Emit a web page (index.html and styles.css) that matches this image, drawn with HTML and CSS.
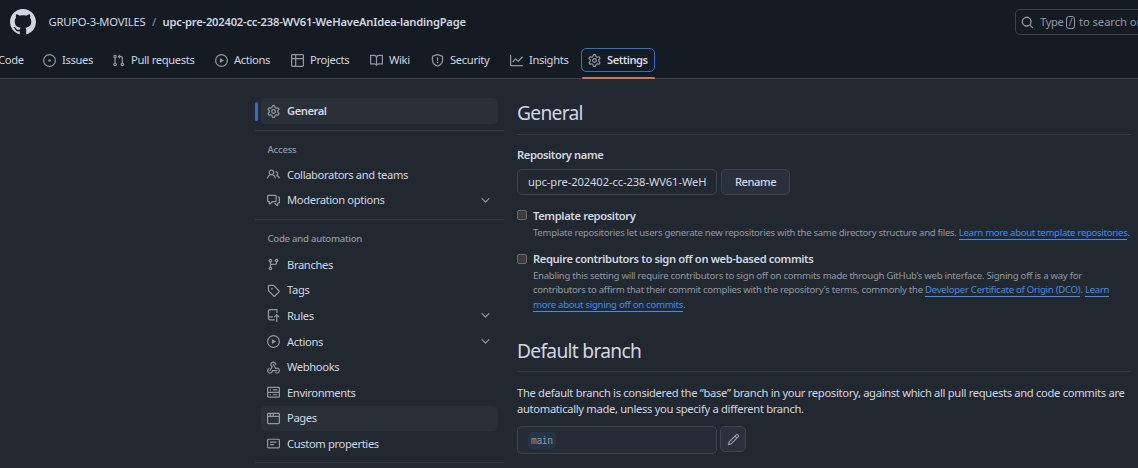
FILE: index.html
```html
<!DOCTYPE html>
<html lang="en">
<head>
<meta charset="utf-8">
<title>Settings</title>
<link rel="stylesheet" href="styles.css">
</head>
<body>
<svg class="defs" aria-hidden="true">
  <symbol id="github" viewBox="0 0 16 16"><path d="M8 0c4.42 0 8 3.58 8 8a8.013 8.013 0 0 1-5.45 7.59c-.4.08-.55-.17-.55-.38 0-.27.01-1.13.01-2.2 0-.75-.25-1.23-.54-1.48 1.78-.2 3.65-.88 3.65-3.95 0-.88-.31-1.59-.82-2.15.08-.2.36-1.02-.08-2.12 0 0-.67-.22-2.2.82-.64-.18-1.32-.27-2-.27-.68 0-1.36.09-2 .27-1.53-1.03-2.2-.82-2.2-.82-.44 1.1-.16 1.92-.08 2.12-.51.56-.82 1.28-.82 2.15 0 3.06 1.86 3.75 3.64 3.95-.23.2-.44.55-.51 1.07-.46.21-1.61.55-2.33-.66-.15-.24-.6-.83-1.23-.82-.67.01-.27.38.01.53.34.19.73.9.82 1.13.16.45.68 1.31 2.69.94 0 .67.01 1.3.01 1.49 0 .21-.15.45-.55.38A7.995 7.995 0 0 1 0 8c0-4.42 3.58-8 8-8Z"/></symbol>
  <symbol id="issue" viewBox="0 0 16 16"><path d="M8 9.5a1.5 1.5 0 1 0 0-3 1.5 1.5 0 0 0 0 3Z"/><path d="M8 0a8 8 0 1 1 0 16A8 8 0 0 1 8 0ZM1.5 8a6.5 6.5 0 1 0 13 0 6.5 6.5 0 0 0-13 0Z"/></symbol>
  <symbol id="pull" viewBox="0 0 16 16"><path d="M1.5 3.25a2.25 2.25 0 1 1 3 2.122v5.256a2.251 2.251 0 1 1-1.5 0V5.372A2.25 2.25 0 0 1 1.5 3.25Zm5.677-.177L9.573.677A.25.25 0 0 1 10 .854V2.5h1A2.5 2.5 0 0 1 13.5 5v5.628a2.251 2.251 0 1 1-1.5 0V5a1 1 0 0 0-1-1h-1v1.646a.25.25 0 0 1-.427.177L7.177 3.427a.25.25 0 0 1 0-.354ZM3.75 2.5a.75.75 0 1 0 0 1.5.75.75 0 0 0 0-1.5Zm0 9.5a.75.75 0 1 0 0 1.5.75.75 0 0 0 0-1.5Zm8.25.75a.75.75 0 1 0 1.5 0 .75.75 0 0 0-1.5 0Z"/></symbol>
  <symbol id="play" viewBox="0 0 16 16"><path d="M8 0a8 8 0 1 1 0 16A8 8 0 0 1 8 0ZM1.5 8a6.5 6.5 0 1 0 13 0 6.5 6.5 0 0 0-13 0Zm4.879-2.773 4.264 2.559a.25.25 0 0 1 0 .428l-4.264 2.559A.25.25 0 0 1 6 10.559V5.442a.25.25 0 0 1 .379-.215Z"/></symbol>
  <symbol id="table" viewBox="0 0 16 16"><path d="M0 1.75C0 .784.784 0 1.75 0h12.5C15.216 0 16 .784 16 1.75v12.5A1.75 1.75 0 0 1 14.25 16H1.75A1.75 1.75 0 0 1 0 14.25ZM6.5 6.5v8h7.75a.25.25 0 0 0 .25-.25V6.5Zm8-1.5V1.75a.25.25 0 0 0-.25-.25H6.5V5Zm-13 1.5v7.75c0 .138.112.25.25.25H5v-8ZM5 5V1.5H1.75a.25.25 0 0 0-.25.25V5Z"/></symbol>
  <symbol id="book" viewBox="0 0 16 16"><path d="M0 1.75A.75.75 0 0 1 .75 1h4.253c1.227 0 2.317.59 3 1.501A3.743 3.743 0 0 1 11.006 1h4.245a.75.75 0 0 1 .75.75v10.5a.75.75 0 0 1-.75.75h-4.507a2.25 2.25 0 0 0-1.591.659l-.622.621a.75.75 0 0 1-1.06 0l-.622-.621A2.25 2.25 0 0 0 5.258 13H.75a.75.75 0 0 1-.75-.75Zm7.251 10.324.004-5.073-.002-2.253A2.25 2.25 0 0 0 5.003 2.5H1.5v9h3.757a3.75 3.75 0 0 1 1.994.574ZM8.755 4.75l-.004 7.322a3.752 3.752 0 0 1 1.992-.572H14.5v-9h-3.495a2.25 2.25 0 0 0-2.25 2.25Z"/></symbol>
  <symbol id="shield" viewBox="0 0 16 16"><path d="M7.467.133a1.748 1.748 0 0 1 1.066 0l5.25 1.68A1.75 1.75 0 0 1 15 3.48V7c0 1.566-.32 3.182-1.303 4.682-.983 1.498-2.585 2.813-5.032 3.855a1.697 1.697 0 0 1-1.33 0c-2.447-1.042-4.049-2.357-5.032-3.855C1.32 10.182 1 8.566 1 7V3.48a1.75 1.75 0 0 1 1.217-1.667Zm.61 1.429a.25.25 0 0 0-.153 0l-5.25 1.68a.25.25 0 0 0-.174.238V7c0 1.358.275 2.666 1.057 3.86.784 1.194 2.121 2.34 4.366 3.297a.196.196 0 0 0 .154 0c2.245-.956 3.582-2.104 4.366-3.298C13.225 9.666 13.5 8.36 13.5 7V3.48a.251.251 0 0 0-.174-.237ZM8.75 4.75v3a.75.75 0 0 1-1.5 0v-3a.75.75 0 0 1 1.5 0ZM9 10.5a1 1 0 1 1-2 0 1 1 0 0 1 2 0Z"/></symbol>
  <symbol id="graph" viewBox="0 0 16 16"><path d="M1.5 1.75V13.5h13.75a.75.75 0 0 1 0 1.5H.75a.75.75 0 0 1-.75-.75V1.75a.75.75 0 0 1 1.5 0Zm14.28 2.53-5.25 5.25a.75.75 0 0 1-1.06 0L7 7.06 4.28 9.78a.75.75 0 0 1-1.06-1.06l3.25-3.25a.75.75 0 0 1 1.06 0L10 7.94l4.72-4.72a.75.75 0 0 1 1.06 1.06Z"/></symbol>
  <symbol id="gear" viewBox="0 0 16 16"><path d="M8 0a8.2 8.2 0 0 1 .701.031C9.444.095 9.99.645 10.16 1.29l.288 1.107c.018.066.079.158.212.224.231.114.454.243.668.386.123.082.233.09.299.071l1.103-.303c.644-.176 1.392.021 1.82.63.27.385.506.792.704 1.218.315.675.111 1.422-.364 1.891l-.814.806c-.049.048-.098.147-.088.294.016.257.016.515 0 .772-.01.147.038.246.088.294l.814.806c.475.469.679 1.216.364 1.891a7.977 7.977 0 0 1-.704 1.217c-.428.61-1.176.807-1.82.63l-1.102-.302c-.067-.019-.177-.011-.3.071a5.909 5.909 0 0 1-.668.386c-.133.066-.194.158-.211.224l-.29 1.106c-.168.646-.715 1.196-1.458 1.26a8.006 8.006 0 0 1-1.402 0c-.743-.064-1.289-.614-1.458-1.26l-.289-1.106c-.018-.066-.079-.158-.212-.224a5.738 5.738 0 0 1-.668-.386c-.123-.082-.233-.09-.299-.071l-1.103.303c-.644.176-1.392-.021-1.82-.63a8.12 8.12 0 0 1-.704-1.218c-.315-.675-.111-1.422.363-1.891l.815-.806c.05-.048.098-.147.088-.294a6.214 6.214 0 0 1 0-.772c.01-.147-.038-.246-.088-.294l-.815-.806C.635 6.045.431 5.298.746 4.623a7.92 7.92 0 0 1 .704-1.217c.428-.61 1.176-.807 1.82-.63l1.102.302c.067.019.177.011.3-.071.214-.143.437-.272.668-.386.133-.066.194-.158.211-.224l.29-1.106C6.009.645 6.556.095 7.299.03 7.53.01 7.764 0 8 0Zm-.571 1.525c-.036.003-.108.036-.137.146l-.289 1.105c-.147.561-.549.967-.998 1.189-.173.086-.34.183-.5.29-.417.278-.97.423-1.529.27l-1.103-.303c-.109-.03-.175.016-.195.045-.22.312-.412.644-.573.99-.014.031-.021.11.059.19l.815.806c.411.406.562.957.53 1.456a4.709 4.709 0 0 0 0 .582c.032.499-.119 1.05-.53 1.456l-.815.806c-.081.08-.073.159-.059.19.162.346.353.677.573.989.02.03.085.076.195.046l1.102-.303c.56-.153 1.113-.008 1.53.27.161.107.328.204.501.29.447.222.85.629.997 1.189l.289 1.105c.029.109.101.143.137.146a6.6 6.6 0 0 0 1.142 0c.036-.003.108-.036.137-.146l.289-1.105c.147-.561.549-.967.998-1.189.173-.086.34-.183.5-.29.417-.278.97-.423 1.529-.27l1.103.303c.109.029.175-.016.195-.045.22-.313.411-.644.573-.99.014-.031.021-.11-.059-.19l-.815-.806c-.411-.406-.562-.957-.53-1.456a4.709 4.709 0 0 0 0-.582c-.032-.499.119-1.05.53-1.456l.815-.806c.081-.08.073-.159.059-.19a6.464 6.464 0 0 0-.573-.989c-.02-.03-.085-.076-.195-.046l-1.102.303c-.56.153-1.113.008-1.53-.27a4.44 4.44 0 0 0-.501-.29c-.447-.222-.85-.629-.997-1.189l-.289-1.105c-.029-.11-.101-.143-.137-.146a6.6 6.6 0 0 0-1.142 0ZM11 8a3 3 0 1 1-6 0 3 3 0 0 1 6 0ZM9.5 8a1.5 1.5 0 1 0-3.001.001A1.5 1.5 0 0 0 9.5 8Z"/></symbol>
  <symbol id="search" viewBox="0 0 16 16"><path d="M10.68 11.74a6 6 0 0 1-7.922-8.982 6 6 0 0 1 8.982 7.922l3.04 3.04a.749.749 0 0 1-1.06 1.06ZM11.5 7a4.499 4.499 0 1 0-8.997 0A4.499 4.499 0 0 0 11.5 7Z"/></symbol>
  <symbol id="people" viewBox="0 0 16 16"><path d="M2 5.5a3.5 3.5 0 1 1 5.898 2.549 5.508 5.508 0 0 1 3.034 4.084.75.75 0 1 1-1.482.235 4 4 0 0 0-7.9 0 .75.75 0 0 1-1.482-.236A5.507 5.507 0 0 1 3.102 8.05 3.493 3.493 0 0 1 2 5.5ZM11 4a3.001 3.001 0 0 1 2.22 5.018 5.01 5.01 0 0 1 2.56 3.012.749.749 0 0 1-.885.954.752.752 0 0 1-.549-.514 3.507 3.507 0 0 0-2.522-2.372.75.75 0 0 1-.574-.73v-.352a.75.75 0 0 1 .416-.672A1.5 1.5 0 0 0 11 5.5.75.75 0 0 1 11 4Zm-5.5-.5a2 2 0 1 0-.001 3.999A2 2 0 0 0 5.5 3.5Z"/></symbol>
  <symbol id="comments" viewBox="0 0 16 16"><path d="M1.75 1h8.5c.966 0 1.75.784 1.75 1.75v5.5A1.75 1.75 0 0 1 10.25 10H7.061l-2.574 2.573A1.458 1.458 0 0 1 2 11.543V10h-.25A1.75 1.75 0 0 1 0 8.25v-5.5C0 1.784.784 1 1.75 1ZM1.5 2.75v5.5c0 .138.112.25.25.25h1a.75.75 0 0 1 .75.75v2.19l2.72-2.72a.749.749 0 0 1 .53-.22h3.5a.25.25 0 0 0 .25-.25v-5.5a.25.25 0 0 0-.25-.25h-8.5a.25.25 0 0 0-.25.25Zm13 2a.25.25 0 0 0-.25-.25h-.5a.75.75 0 0 1 0-1.5h.5c.966 0 1.75.784 1.75 1.75v5.5A1.75 1.75 0 0 1 14.25 12H14v1.543a1.458 1.458 0 0 1-2.487 1.03L9.22 12.28a.749.749 0 0 1 1.06-1.06l2.22 2.22v-2.19a.75.75 0 0 1 .75-.75h1a.25.25 0 0 0 .25-.25Z"/></symbol>
  <symbol id="branch" viewBox="0 0 16 16"><path d="M9.5 3.25a2.25 2.25 0 1 1 3 2.122V6A2.5 2.5 0 0 1 10 8.5H6a1 1 0 0 0-1 1v1.128a2.251 2.251 0 1 1-1.5 0V5.372a2.25 2.25 0 1 1 1.5 0v1.836A2.493 2.493 0 0 1 6 7h4a1 1 0 0 0 1-1v-.628A2.25 2.25 0 0 1 9.5 3.25Zm-6 0a.75.75 0 1 0 1.5 0 .75.75 0 0 0-1.5 0Zm8.25-.75a.75.75 0 1 0 0 1.5.75.75 0 0 0 0-1.5ZM4.25 12a.75.75 0 1 0 0 1.5.75.75 0 0 0 0-1.5Z"/></symbol>
  <symbol id="tag" viewBox="0 0 16 16"><path d="M1 7.775V2.75C1 1.784 1.784 1 2.75 1h5.025c.464 0 .91.184 1.238.513l6.25 6.25a1.75 1.75 0 0 1 0 2.474l-5.026 5.026a1.75 1.75 0 0 1-2.474 0l-6.25-6.25A1.752 1.752 0 0 1 1 7.775Zm1.5 0c0 .066.026.13.073.177l6.25 6.25a.25.25 0 0 0 .354 0l5.025-5.025a.25.25 0 0 0 0-.354l-6.25-6.25a.25.25 0 0 0-.177-.073H2.75a.25.25 0 0 0-.25.25ZM6 5a1 1 0 1 1 0 2 1 1 0 0 1 0-2Z"/></symbol>
  <symbol id="rules" viewBox="0 0 16 16"><path d="M1 2.5A2.5 2.5 0 0 1 3.5 0h8.75a.75.75 0 0 1 .75.75v3.5a.75.75 0 0 1-1.5 0V1.5h-8a1 1 0 0 0-1 1v6.708A2.493 2.493 0 0 1 3.5 9h3.25a.75.75 0 0 1 0 1.5H3.5a1 1 0 0 0 0 2h5.75a.75.75 0 0 1 0 1.5H3.5A2.5 2.5 0 0 1 1 11.5Zm13.23 7.79-1.48-1.49v6.45a.75.75 0 0 1-1.5 0V8.8L9.77 10.29a.75.75 0 0 1-1.06-1.06l2.76-2.77a.75.75 0 0 1 1.06 0l2.76 2.77a.75.75 0 0 1-1.06 1.06Z"/></symbol>
  <symbol id="webhook" viewBox="0 0 16 16"><path d="M5.5 4.25a2.25 2.25 0 0 1 4.5 0 .75.75 0 0 0 1.5 0 3.75 3.75 0 1 0-6.14 2.889l-2.272 4.258a.75.75 0 0 0 1.324.706L7 7.25a.75.75 0 0 0-.309-1.015A2.25 2.25 0 0 1 5.5 4.25Z"/><path d="M7.364 3.607a.75.75 0 0 1 1.03.257l2.608 4.349a3.75 3.75 0 1 1-.628 6.785.75.75 0 0 1 .752-1.299 2.25 2.25 0 1 0-.033-3.88.75.75 0 0 1-1.03-.256L7.107 4.636a.75.75 0 0 1 .257-1.03Z"/><path d="M2.9 8.776A.75.75 0 0 1 2.625 9.8 2.25 2.25 0 1 0 6 11.75a.75.75 0 0 1 .75-.751h5.5a.75.75 0 0 1 0 1.5H7.425a3.751 3.751 0 1 1-5.55-3.998.75.75 0 0 1 1.024.274Z"/></symbol>
  <symbol id="server" viewBox="0 0 16 16"><path d="M1.75 1h12.5c.966 0 1.75.784 1.75 1.75v4c0 .372-.116.717-.314 1 .198.283.314.628.314 1v4a1.75 1.75 0 0 1-1.75 1.75H1.75A1.75 1.75 0 0 1 0 12.75v-4c0-.358.109-.707.314-1a1.739 1.739 0 0 1-.314-1v-4C0 1.784.784 1 1.75 1ZM1.5 2.75v4c0 .138.112.25.25.25h12.5a.25.25 0 0 0 .25-.25v-4a.25.25 0 0 0-.25-.25H1.75a.25.25 0 0 0-.25.25Zm.25 5.75a.25.25 0 0 0-.25.25v4c0 .138.112.25.25.25h12.5a.25.25 0 0 0 .25-.25v-4a.25.25 0 0 0-.25-.25ZM7 4.75A.75.75 0 0 1 7.75 4h4.5a.75.75 0 0 1 0 1.5h-4.5A.75.75 0 0 1 7 4.75ZM7.75 10h4.5a.75.75 0 0 1 0 1.5h-4.5a.75.75 0 0 1 0-1.5ZM3 4.75A.75.75 0 0 1 3.75 4h.5a.75.75 0 0 1 0 1.5h-.5A.75.75 0 0 1 3 4.75ZM3.75 10h.5a.75.75 0 0 1 0 1.5h-.5a.75.75 0 0 1 0-1.5Z"/></symbol>
  <symbol id="browser" viewBox="0 0 16 16"><path d="M0 2.75C0 1.784.784 1 1.75 1h12.5c.966 0 1.75.784 1.75 1.75v10.5A1.75 1.75 0 0 1 14.25 15H1.75A1.75 1.75 0 0 1 0 13.25ZM14.5 6h-13v7.25c0 .138.112.25.25.25h12.5a.25.25 0 0 0 .25-.25Zm-6-3.5v2h6V2.75a.25.25 0 0 0-.25-.25ZM5 2.5v2h2v-2Zm-3.25 0a.25.25 0 0 0-.25.25V4.5h2v-2Z"/></symbol>
  <symbol id="note" viewBox="0 0 16 16"><path d="M0 3.75C0 2.784.784 2 1.75 2h12.5c.966 0 1.75.784 1.75 1.75v8.5A1.75 1.75 0 0 1 14.25 14H1.75A1.75 1.75 0 0 1 0 12.25Zm1.75-.25a.25.25 0 0 0-.25.25v8.5c0 .138.112.25.25.25h12.5a.25.25 0 0 0 .25-.25v-8.5a.25.25 0 0 0-.25-.25ZM3.5 6.25a.75.75 0 0 1 .75-.75h7a.75.75 0 0 1 0 1.5h-7a.75.75 0 0 1-.75-.75Zm.75 2.25h4a.75.75 0 0 1 0 1.5h-4a.75.75 0 0 1 0-1.5Z"/></symbol>
  <symbol id="chevron" viewBox="0 0 16 16"><path d="M12.78 5.22a.749.749 0 0 1 0 1.06l-4.25 4.25a.749.749 0 0 1-1.06 0L3.22 6.28a.749.749 0 1 1 1.06-1.06L8 8.939l3.72-3.719a.749.749 0 0 1 1.06 0Z"/></symbol>
  <symbol id="pencil" viewBox="0 0 16 16"><path d="M11.013 1.427a1.75 1.75 0 0 1 2.474 0l1.086 1.086a1.75 1.75 0 0 1 0 2.474l-8.61 8.61c-.21.21-.47.364-.756.445l-3.251.93a.75.75 0 0 1-.927-.928l.929-3.25c.081-.286.235-.547.445-.758l8.61-8.61Zm.176 4.823L9.75 4.81l-6.286 6.287a.253.253 0 0 0-.064.108l-.558 1.953 1.953-.558a.253.253 0 0 0 .108-.064Zm1.238-3.763a.25.25 0 0 0-.354 0L10.811 3.75l1.439 1.44 1.263-1.263a.25.25 0 0 0 0-.354Z"/></symbol>
</svg>
<header class="header">
  <div class="topbar">
    <svg class="logo"><use href="#github"/></svg>
    <span class="owner">GRUPO-3-MOVILES</span>
    <span class="slash">/</span>
    <span class="repo">upc-pre-202402-cc-238-WV61-WeHaveAnIdea-landingPage</span>
    <div class="search"><svg class="icon"><use href="#search"/></svg><span class="type">Type</span><kbd>/</kbd><span class="hint">to search or</span></div>
  </div>
  <nav class="tabs">
    <a class="tab code">Code</a>
    <a class="tab"><svg class="icon"><use href="#issue"/></svg>Issues</a>
    <a class="tab"><svg class="icon"><use href="#pull"/></svg>Pull requests</a>
    <a class="tab"><svg class="icon"><use href="#play"/></svg>Actions</a>
    <a class="tab"><svg class="icon"><use href="#table"/></svg>Projects</a>
    <a class="tab"><svg class="icon"><use href="#book"/></svg>Wiki</a>
    <a class="tab"><svg class="icon"><use href="#shield"/></svg>Security</a>
    <a class="tab"><svg class="icon"><use href="#graph"/></svg>Insights</a>
    <a class="tab selected"><svg class="icon"><use href="#gear"/></svg>Settings</a>
  </nav>
</header>
<div class="layout">
  <aside class="sidebar">
    <a class="item current"><svg class="icon"><use href="#gear"/></svg><span class="label">General</span></a>
    <section class="group">
      <h3>Access</h3>
      <a class="item"><svg class="icon"><use href="#people"/></svg><span class="label">Collaborators and teams</span></a>
      <a class="item"><svg class="icon"><use href="#comments"/></svg><span class="label">Moderation options</span><svg class="icon"><use href="#chevron"/></svg></a>
    </section>
    <section class="group automation">
      <h3>Code and automation</h3>
      <a class="item"><svg class="icon"><use href="#branch"/></svg><span class="label">Branches</span></a>
      <a class="item"><svg class="icon"><use href="#tag"/></svg><span class="label">Tags</span></a>
      <a class="item"><svg class="icon"><use href="#rules"/></svg><span class="label">Rules</span><svg class="icon"><use href="#chevron"/></svg></a>
      <a class="item"><svg class="icon"><use href="#play"/></svg><span class="label">Actions</span><svg class="icon"><use href="#chevron"/></svg></a>
      <a class="item"><svg class="icon"><use href="#webhook"/></svg><span class="label">Webhooks</span></a>
      <a class="item"><svg class="icon"><use href="#server"/></svg><span class="label">Environments</span></a>
      <a class="item hovered"><svg class="icon"><use href="#browser"/></svg><span class="label">Pages</span></a>
      <a class="item"><svg class="icon"><use href="#note"/></svg><span class="label">Custom properties</span></a>
    </section>
    <section class="group last"></section>
  </aside>
  <main class="content">
    <h2>General</h2>
    <div class="field-label">Repository name</div>
    <div class="row"><div class="input">upc-pre-202402-cc-238-WV61-WeH</div><div class="button">Rename</div></div>
    <div class="option">
      <i class="checkbox"></i>
      <div><h4>Template repository</h4>
      <p class="template-note">Template repositories let users generate new repositories with the same directory structure and files. <a>Learn more about template repositories</a>.</p></div>
    </div>
    <div class="option second">
      <i class="checkbox"></i>
      <div><h4>Require contributors to sign off on web-based commits</h4>
      <p class="signoff-note">Enabling this setting will require contributors to sign off on commits made through GitHub’s web interface. Signing off is a way for<br>contributors to affirm that their commit complies with the repository's terms, commonly the <a>Developer Certificate of Origin (DCO)</a>. <a>Learn</a><br><a>more about signing off on commits</a>.</p></div>
    </div>
    <h2 class="branch-title">Default branch</h2>
    <p class="body">The default branch is considered the “base” branch in your repository, against which all pull requests and code commits are<br>automatically made, unless you specify a different branch.</p>
    <div class="row branch-row"><div class="input branch-box"><code>main</code></div><div class="button edit"><svg class="icon"><use href="#pencil"/></svg></div></div>
  </main>
</div>
</body>
</html>
```
FILE: styles.css
```css
* { box-sizing: border-box; }
body { margin: 0; width: 1138px; height: 468px; overflow: hidden; background: #212830; color: #d1d7e0; font: 11.2px/16px "Noto Sans", "Open Sans", sans-serif; letter-spacing: -.2px; white-space: nowrap; }
.defs { display: none; }
.icon { width: 13px; height: 13px; flex: none; fill: #9198a1; }
h2, h3, h4, p { margin: 0; }

.header { height: 79px; background: #151b23; border-bottom: 1px solid #3d444d; }
.topbar { display: flex; align-items: center; height: 44px; padding-left: 10px; overflow: hidden; }
.logo { width: 26px; height: 26px; margin-right: 12.5px; fill: #d1d7e0; flex: none; }
.owner { flex: none; width: 97px; }
.slash { flex: none; width: 17px; text-align: center; color: #9198a1; }
.repo { flex: none; width: 852.5px; font-weight: 600; letter-spacing: -.21px; }
.search { display: flex; align-items: center; flex: none; width: 200px; height: 26px; border: 1px solid #3d444d; border-radius: 5px; padding-left: 5px; color: #9198a1; }
.search .icon { margin-right: 6px; }
.type { width: 23px; letter-spacing: -.35px; }
kbd { font: 10px/11px "Noto Sans", sans-serif; border: 1px solid #9198a1; border-radius: 3px; width: 9px; height: 13px; text-align: center; margin: 0 4px 0 3px; }
.hint { letter-spacing: -.05px; }
.tabs { display: grid; grid-template-columns: 43px 69px 103px 76px 79px 61px 79px 71px 74px; height: 34px; letter-spacing: -.34px; }
.tab { display: flex; align-items: center; height: 32px; gap: 6px; }
.code { margin-left: -2px; }
.selected { position: relative; height: 24px; margin-top: 4px; padding-left: 6px; border: 1px solid #316dca; border-radius: 5px; font-weight: 600; letter-spacing: -.5px; }
.selected::after { content: ""; position: absolute; left: 0; right: -1px; top: 28px; height: 2px; background: #d5725c; border-radius: 2px; }

.layout { display: grid; grid-template-columns: 249px 614px; column-gap: 13px; padding-left: 255px; }
.sidebar { padding-top: 19px; letter-spacing: -.36px; }
.item { display: flex; align-items: center; height: 25.6px; margin: 0 6px; padding: 0 6px; gap: 7px; border-radius: 5px; }
.label { flex: 1; }
.current { position: relative; height: 26px; background: #2a3038; font-weight: 600; letter-spacing: -.45px; }
.current::before { content: ""; position: absolute; left: -6px; top: 4px; width: 3px; height: 19px; border-radius: 3px; background: #316dca; }
.hovered { background: #2a3038; }
.group { margin-top: 6px; border-top: 1px solid #343b44; }
.group h3 { height: 31px; padding: 11px 12.5px 0; font-size: 9.6px; font-weight: 500; letter-spacing: -.27px; color: #9198a1; }
.automation { margin-top: 5.8px; }
.automation h3 { height: 32px; }
.last { margin-top: 5.2px; }

.content { padding-top: 18px; }
h2 { height: 38px; border-bottom: 1px solid #343b44; font-size: 19.2px; line-height: 32px; font-weight: 400; letter-spacing: -.7px; }
.field-label { margin-top: 12px; font-weight: 600; letter-spacing: -.42px; }
.row { display: flex; gap: 4px; margin-top: 6px; }
.input { display: flex; align-items: center; width: 200px; height: 26px; padding-left: 10px; border: 1px solid #3d444d; border-radius: 5px; letter-spacing: -.1px; }
.button { display: flex; align-items: center; justify-content: center; width: 69px; height: 26px; background: #2a313c; border: 1px solid #3d444d; border-radius: 5px; font-weight: 500; letter-spacing: -.45px; }
.option { display: flex; gap: 6px; margin-top: 13px; }
.option.second { margin-top: 11px; }
.checkbox { flex: none; width: 10px; height: 10px; margin-top: 2px; border: 1px solid #6a6a6a; border-radius: 2px; background: #3b3b3b; }
.second .checkbox { margin-top: 3px; }
h4 { font-size: 11.2px; font-weight: 600; letter-spacing: -.38px; }
.option p { margin-top: 2px; font-size: 9.6px; line-height: 14.4px; color: #9198a1; }
.option .template-note { margin-top: 1px; line-height: 15px; letter-spacing: -.305px; }
.signoff-note { letter-spacing: -.275px; }
.option a { color: #478be6; border-bottom: 1px solid #478be6; }
.branch-title { height: 37px; margin-top: 22.8px; line-height: 31px; }
.body { margin-top: 13px; letter-spacing: -.315px; }
.branch-row { gap: 3px; margin-top: 9px; }
.branch-box { height: 28px; background: #262c36; }
code { font: 9.6px/17px "DejaVu Sans Mono", monospace; letter-spacing: -.4px; padding: 0 3px; border-radius: 5px; background: #253447; color: #9198a1; }
.edit { width: 26px; }
```
